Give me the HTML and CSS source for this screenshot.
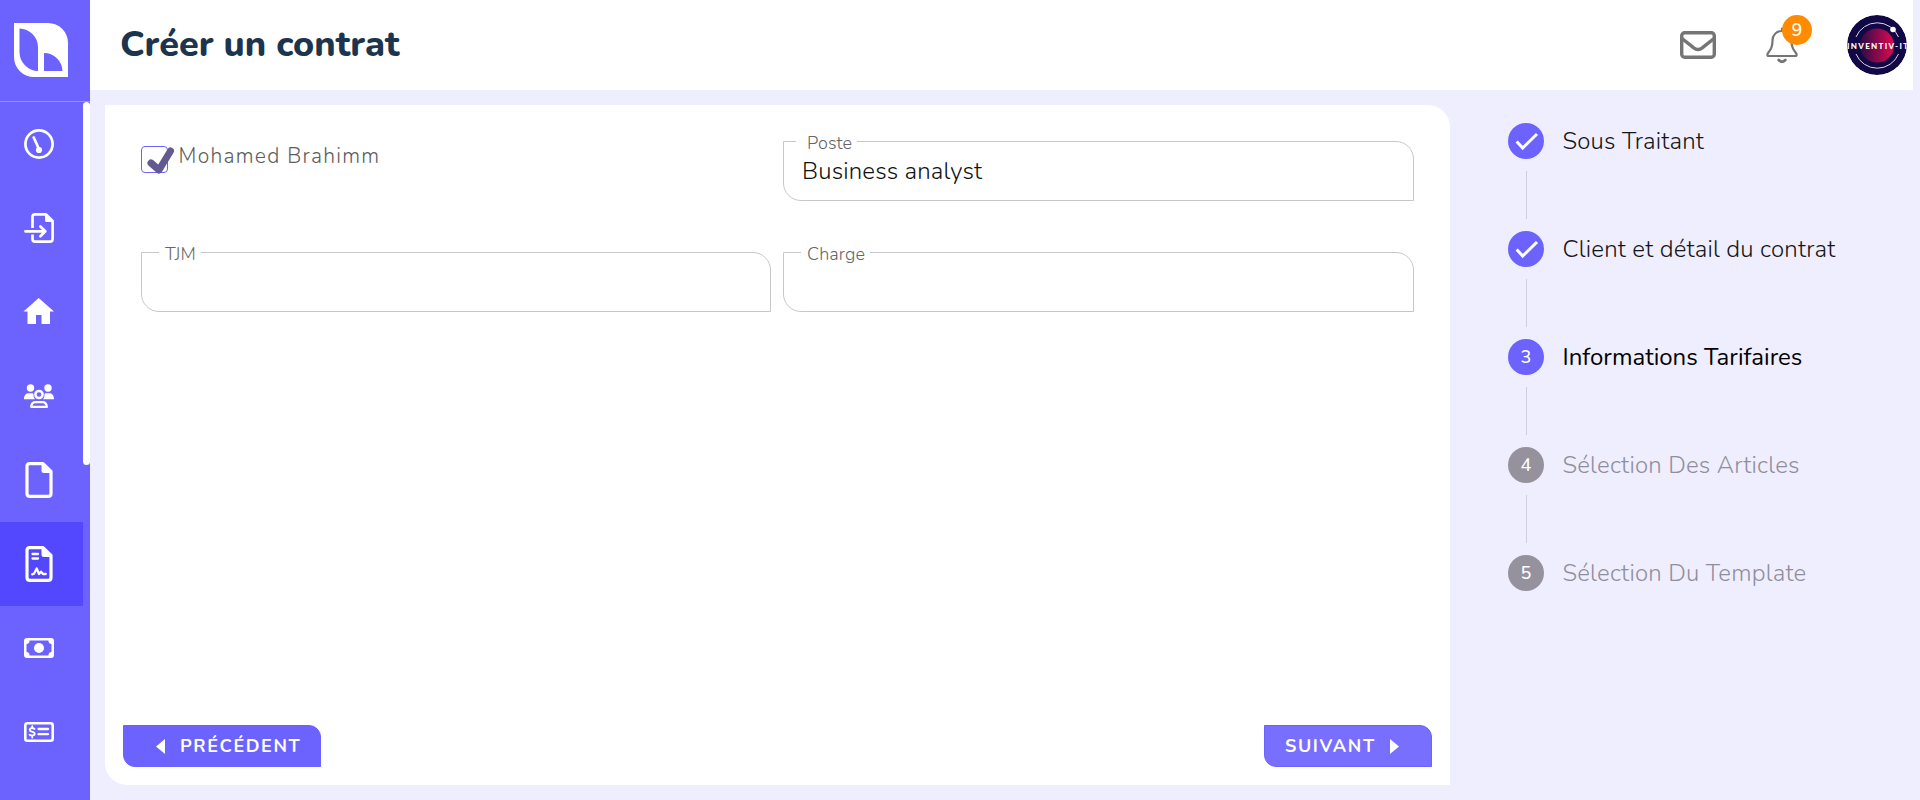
FILE: index.html
```html
<!DOCTYPE html>
<html lang="fr">
<head>
<meta charset="utf-8">
<title>Créer un contrat</title>
<link rel="stylesheet" href="styles.css">
</head>
<body>
<div class="app">
  <aside class="sidebar">
    <div class="brand">
      <svg class="logo" viewBox="0 0 54 54"><path fill="#fff" fill-rule="evenodd" d="M0 0H34A20 20 0 0 1 54 20V54H20A20 20 0 0 1 0 34ZM5.500 5.500V29A19 19 0 0 0 24 48V24A19 19 0 0 0 5.500 5.500ZM30 30V48H48.500A18.500 18.500 0 0 0 30 30Z"/></svg>
    </div>
    <div class="scroller">
      <nav class="menu">
        <a class="item"><svg width="30" height="30" viewBox="0 0 30 30" fill="none" stroke="#fff" stroke-width="2.700" stroke-linecap="round"><circle cx="15" cy="15" r="13.600"/><path d="M9.700 8.500 14.500 19"/><circle cx="15" cy="21" r="3.100" fill="#fff" stroke="none"/></svg></a>
        <a class="item"><svg width="30" height="30" viewBox="0 0 30 30" fill="none" stroke="#fff" stroke-width="2.700" stroke-linecap="round" stroke-linejoin="round"><path stroke-linecap="butt" d="M8.500 15V4Q8.500 1.400 11 1.400H22L28.600 8V26Q28.600 28.600 26 28.600H11Q8.500 28.600 8.500 26V21.500"/><path fill="#fff" stroke="none" d="M21 1 29 9H22.500Q21 9 21 7.500Z"/><path d="M1.400 18.300H21M16.400 13.500 21.300 18.300 16.400 23.200"/></svg></a>
        <a class="item"><svg width="30" height="30" viewBox="0 0 30 30"><path fill="#fff" d="M14.700 1 30 14.500H26V27H17.500V18H12V27H3.500V14.500H-.5Z"/></svg></a>
        <a class="item"><svg width="30" height="30" viewBox="0 0 30 30" fill="#fff"><circle cx="6.500" cy="7" r="3.700"/><circle cx="24" cy="7" r="3.700"/><path d="M0 18.200C0 14 2 12.300 5 12.300H8.500Q9.500 12.300 9.500 13.500Q9.200 16.500 11 18.200ZM30 18.200C30 14 28 12.300 25 12.300H21.500Q20.500 12.300 20.500 13.500Q20.800 16.500 19 18.200Z"/><circle cx="15" cy="13.500" r="3.600" fill="none" stroke="#fff" stroke-width="2.500"/><path fill="none" stroke="#fff" stroke-width="2.300" stroke-linejoin="round" d="M7.200 25.800Q7.500 21.200 11.500 21.200H18.500Q22.500 21.200 22.800 25.800Z"/></svg></a>
        <a class="item"><svg width="28" height="36" viewBox="0 0 28 36"><path fill="none" stroke="#fff" stroke-width="3.200" stroke-linejoin="round" d="M4.500 1.600H18L26 9.500V31.500Q26 34.400 23 34.400H5Q2 34.400 2 31.500V4.500Q2 1.600 4.500 1.600Z"/><path fill="#fff" d="M16.500 1 27 11H19Q16.500 11 16.500 8.500Z"/></svg></a>
        <a class="item active"><svg width="28" height="36" viewBox="0 0 28 36"><path fill="none" stroke="#fff" stroke-width="3.200" stroke-linejoin="round" d="M4.500 1.600H18L26 9.500V31.500Q26 34.400 23 34.400H5Q2 34.400 2 31.500V4.500Q2 1.600 4.500 1.600Z"/><path fill="#fff" d="M16.500 1 27 11H19Q16.500 11 16.500 8.500Z"/><path fill="none" stroke="#fff" stroke-width="2.300" stroke-linecap="round" stroke-linejoin="round" d="M7.500 8H13M7.500 12.500H13M7.200 28.300 9 27.700 11.700 22.500 14 28 16 25.700 18 28H20.800"/></svg></a>
        <a class="item"><svg width="30" height="20" viewBox="0 0 30 20"><rect width="30" height="20" rx="3" fill="#fff"/><path fill="#6c63ff" d="M5.500 2.500H24.500A3 3 0 0 0 27.500 6V14A3 3 0 0 0 24.500 17.500H5.500A3 3 0 0 0 2.500 14V6A3 3 0 0 0 5.500 2.500Z"/><circle cx="15" cy="10" r="5" fill="#fff"/></svg></a>
        <a class="item"><svg width="30" height="20" viewBox="0 0 30 20" fill="none" stroke="#fff" stroke-linecap="round"><rect x="1.300" y="1.300" width="27.400" height="17.400" rx="2" stroke-width="2.600"/><path stroke-width="2.300" d="M14.500 7H24M14.500 12.200H24"/><path stroke-width="1.900" d="M10.500 6.800Q8 5.500 6.400 6.500C5 8 6 9.200 8 9.700C10.500 10.200 11.300 11.500 10.200 13Q8 14.200 5.600 12.700M8.200 4.200V5.500M8.200 14V15.500"/></svg></a>
      </nav>
      <div class="thumb"></div>
    </div>
  </aside>
  <div class="page">
    <header class="topbar">
      <h1 class="title">Créer un contrat</h1>
      <div class="tools">
        <svg class="mail" viewBox="0 0 36 28" fill="none" stroke="#757575" stroke-width="3.400" stroke-linejoin="round"><rect x="1.700" y="1.700" width="32.600" height="24.600" rx="3"/><path d="M2 7.500 13.500 16.700Q18 20.500 22.500 16.700L34 7.500"/></svg>
        <div class="bell">
          <svg viewBox="0 0 32 36" fill="none" stroke="#757575" stroke-width="2.200" stroke-linecap="round" stroke-linejoin="round"><path d="M16 1.500V4M16 4C10 4 6.500 8.500 6.500 13.500C6.500 20.500 4.500 22.500 1.700 26.500Q.7 29 3 29H29Q31.300 29 30.300 26.500C27.500 22.500 25.500 20.500 25.500 13.500C25.500 8.500 22 4 16 4Z"/><path stroke-width="2.800" d="M12.700 33Q16 36.500 19.300 33"/></svg>
          <span class="badge">9</span>
        </div>
        <svg class="avatar" viewBox="0 0 60 60">
          <defs>
            <linearGradient id="planet" x1="0" x2="1"><stop offset="0" stop-color="#2a0b48"/><stop offset="1" stop-color="#e30850"/></linearGradient>
            <clipPath id="disc"><circle cx="30" cy="30" r="30"/></clipPath>
          </defs>
          <g clip-path="url(#disc)">
            <circle cx="30" cy="30" r="30" fill="#120846"/>
            <circle cx="30" cy="30.500" r="17" fill="url(#planet)"/>
            <path fill="none" stroke="#d9d5e6" stroke-width="1" d="M9 22A23 23 0 0 1 51.500 22M9 39A23 23 0 0 0 51.500 39"/>
            <circle cx="46" cy="14.500" r="2.800" fill="#fff"/>
            <text x="0" y="33.500" textLength="61" lengthAdjust="spacing" class="avatar-name">INVENTIV-IT</text>
          </g>
        </svg>
      </div>
    </header>
    <main class="content">
      <section class="card">
        <div class="form">
          <label class="person">
            <span class="checkbox"><svg viewBox="0 0 34 30"><path fill="none" stroke="#635a92" stroke-width="7" stroke-linecap="round" stroke-linejoin="round" d="M10 17 18 24 29.500 5"/></svg></span>
            <span class="person-name">Mohamed Brahimm</span>
          </label>
          <fieldset class="field filled"><legend><span>Poste</span></legend><div class="value">Business analyst</div></fieldset>
          <fieldset class="field"><legend><span>TJM</span></legend></fieldset>
          <fieldset class="field"><legend><span>Charge</span></legend></fieldset>
        </div>
        <div class="actions">
          <button class="btn prev"><svg width="9" height="15" viewBox="0 0 9 15"><path fill="#fff" d="M9 0V15L0 7.500Z"/></svg><span>PRÉCÉDENT</span></button>
          <button class="btn next"><span>SUIVANT</span><svg width="9" height="15" viewBox="0 0 9 15"><path fill="#fff" d="M0 0V15L9 7.500Z"/></svg></button>
        </div>
      </section>
      <ol class="steps">
        <li class="step done"><span class="dot"><svg viewBox="0 0 36 36"><path fill="none" stroke="#fff" stroke-width="3" d="M8.700 18.500 14.700 25 29 11"/></svg></span><span class="label">Sous Traitant</span></li>
        <li class="step done"><span class="dot"><svg viewBox="0 0 36 36"><path fill="none" stroke="#fff" stroke-width="3" d="M8.700 18.500 14.700 25 29 11"/></svg></span><span class="label">Client et détail du contrat</span></li>
        <li class="step current"><span class="dot">3</span><span class="label">Informations Tarifaires</span></li>
        <li class="step todo"><span class="dot">4</span><span class="label">Sélection Des Articles</span></li>
        <li class="step todo"><span class="dot">5</span><span class="label">Sélection Du Template</span></li>
      </ol>
    </main>
  </div>
</div>
</body>
</html>
```
FILE: styles.css
```css
* { box-sizing: border-box; }
body { margin: 0; background: #efeeff; font-family: Nunito, Lato, "Open Sans", sans-serif; font-weight: 300; color: #212121; }
.app { display: flex; height: 800px; overflow: hidden; }
.sidebar { width: 90px; flex: none; background: #6c63ff; display: flex; flex-direction: column; }
.brand { height: 102px; padding: 23px 0 0 14px; border-bottom: 1px solid #958fff; flex: none; }
.logo { display: block; width: 54px; height: 54px; }
.scroller { display: flex; flex: 1; min-height: 0; }
.menu { width: 83px; display: flex; flex-direction: column; }
.item { height: 84px; flex: none; display: flex; align-items: center; justify-content: center; padding-right: 5px; }
.item svg { display: block; overflow: visible; }
.active { background: #5448ff; }
.thumb { width: 7px; height: 363px; border-radius: 4px; background: #fff; }
.page { flex: 1; display: flex; flex-direction: column; }
.topbar { height: 90px; margin-right: 7px; padding: 0 6px 0 30px; background: #fff; display: flex; align-items: center; justify-content: space-between; }
.title { margin: 0; font-size: 36px; line-height: 44px; font-weight: 800; color: #1c344d; padding-bottom: 1px; }
.tools { display: flex; align-items: center; }
.mail { width: 36px; height: 28px; margin-right: 50px; }
.bell { position: relative; width: 32px; height: 36px; margin-right: 49px; }
.bell svg { display: block; width: 32px; height: 36px; }
.badge { position: absolute; left: 16px; top: -12px; width: 30px; height: 30px; border-radius: 50%; background: #ff8c00; color: #fff; font-size: 18px; line-height: 30px; text-align: center; font-weight: 500; }
.avatar { width: 60px; height: 60px; }
.avatar-name { font: 900 8px Lato, sans-serif; fill: #fff; }
.content { flex: 1; display: flex; padding: 15px 0 15px 15px; }
.card { width: 1345px; background: #fff; border-radius: 0 22px 0 22px; display: flex; flex-direction: column; justify-content: space-between; padding: 36px 18px 18px; }
.form { display: grid; grid-template-columns: 630px 631px; column-gap: 12px; row-gap: 51px; padding: 0 18px; grid-auto-rows: 60px; }
.person { display: flex; padding-top: 5px; }
.checkbox { width: 27px; height: 27px; border: 1px solid #6c63ff; border-radius: 4px; flex: none; }
.checkbox svg { display: block; width: 34px; height: 30px; margin: -1px 0 0 -1px; overflow: visible; }
.person-name { font-size: 21px; line-height: 26px; margin: -3px 0 0 10.5px; letter-spacing: 1.3px; color: #5c5c5c; }
.field { margin: 0; min-width: 0; border: 1px solid #c7c7c7; border-radius: 0 18px 0 18px; padding: 0; height: 60px; }
.field legend { font-size: 18px; line-height: 1px; height: 1px; margin-left: 17px; padding: 0 5px 0 6px; letter-spacing: .1px; color: #666; }
.field legend span { display: block; line-height: 20px; margin-top: -8px; }
.filled legend { margin-left: 12px; padding-left: 11px; }
.value { font-size: 24px; line-height: 30px; padding: 14px 0 0 18px; letter-spacing: .15px; color: #111; }
.actions { display: flex; justify-content: space-between; }
.btn { height: 42px; border: 1px solid #6c63ff; border-radius: 0 12px 0 12px; background: #6c63ff; color: #fff; font: 700 18px/24px Nunito, Lato, sans-serif; letter-spacing: 1.6px; display: flex; align-items: center; padding: 0; }
.prev { width: 198px; padding-left: 32px; gap: 15px; }
.next { width: 168px; padding-left: 20px; gap: 14px; background: #786fff; }
.steps { list-style: none; margin: 0; padding: 18px 0 0 58px; display: flex; flex-direction: column; }
.step { height: 108px; display: grid; grid-template-columns: 36px auto; grid-template-rows: 36px 48px; row-gap: 12px; column-gap: 18.5px; }
.dot { width: 36px; height: 36px; border-radius: 50%; background: #6c63ff; color: #fff; font-size: 18px; line-height: 36px; text-align: center; font-weight: 500; }
.dot svg { display: block; }
.label { font-size: 24px; line-height: 36px; white-space: nowrap; letter-spacing: .2px; color: #151515; }
.step:not(:last-child)::after { content: ""; width: 1px; background: #d0cedd; margin-left: 18px; }
.current .label { color: #000; font-weight: 400; letter-spacing: 0; }
.todo .dot { background: #95929e; }
.todo .label { color: #918e9b; }
```
